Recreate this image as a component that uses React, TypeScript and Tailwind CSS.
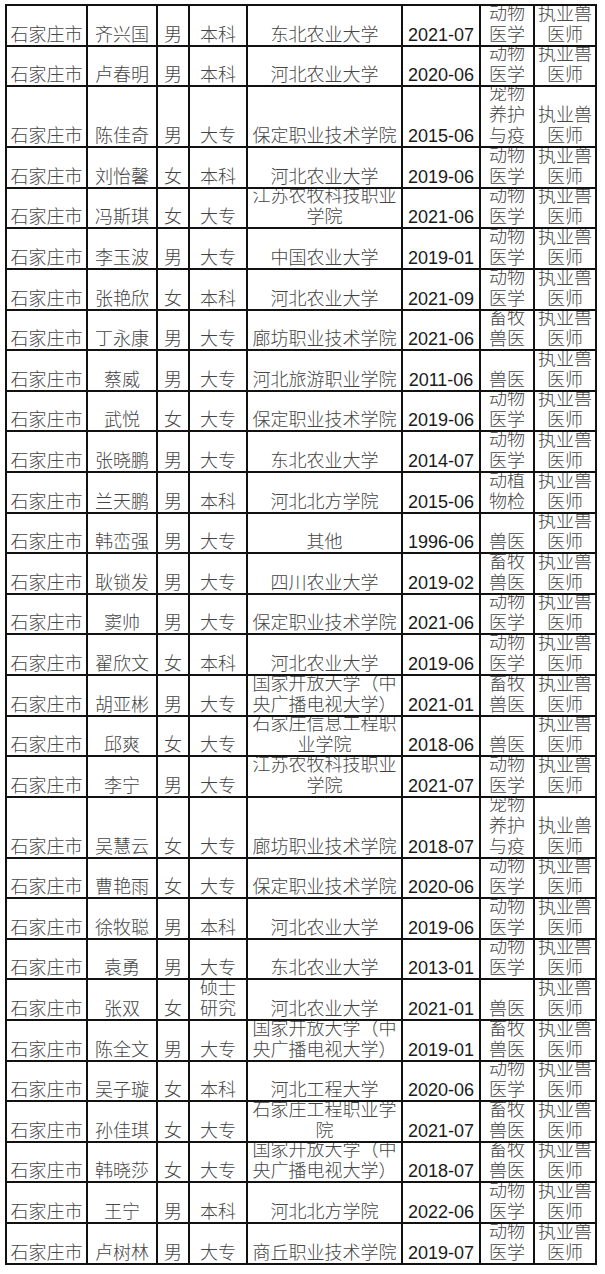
type Row = {
  name: string;
  gender: string;
  edu: string[];
  school: string[];
  date: string;
  major: string[];
  tall?: boolean;
};

const animal = ["动物", "医学"];
const herd = ["畜牧", "兽医"];
const pet = ["宠物", "养护", "与疫"];
const vet = ["执业兽", "医师"];
const ouc = ["国家开放大学（中", "央广播电视大学）"];
const jiangsu = ["江苏农牧科技职业", "学院"];

const rows: Row[] = [
  { name: "齐兴国", gender: "男", edu: ["本科"], school: ["东北农业大学"], date: "2021-07", major: animal },
  { name: "卢春明", gender: "男", edu: ["本科"], school: ["河北农业大学"], date: "2020-06", major: animal },
  { name: "陈佳奇", gender: "男", edu: ["大专"], school: ["保定职业技术学院"], date: "2015-06", major: pet, tall: true },
  { name: "刘怡馨", gender: "女", edu: ["本科"], school: ["河北农业大学"], date: "2019-06", major: animal },
  { name: "冯斯琪", gender: "女", edu: ["大专"], school: jiangsu, date: "2021-06", major: animal },
  { name: "李玉波", gender: "男", edu: ["大专"], school: ["中国农业大学"], date: "2019-01", major: animal },
  { name: "张艳欣", gender: "女", edu: ["本科"], school: ["河北农业大学"], date: "2021-09", major: animal },
  { name: "丁永康", gender: "男", edu: ["大专"], school: ["廊坊职业技术学院"], date: "2021-06", major: herd },
  { name: "蔡威", gender: "男", edu: ["大专"], school: ["河北旅游职业学院"], date: "2011-06", major: ["兽医"] },
  { name: "武悦", gender: "女", edu: ["大专"], school: ["保定职业技术学院"], date: "2019-06", major: animal },
  { name: "张晓鹏", gender: "男", edu: ["大专"], school: ["东北农业大学"], date: "2014-07", major: animal },
  { name: "兰天鹏", gender: "男", edu: ["本科"], school: ["河北北方学院"], date: "2015-06", major: ["动植", "物检"] },
  { name: "韩峦强", gender: "男", edu: ["大专"], school: ["其他"], date: "1996-06", major: ["兽医"] },
  { name: "耿锁发", gender: "男", edu: ["大专"], school: ["四川农业大学"], date: "2019-02", major: herd },
  { name: "窦帅", gender: "男", edu: ["大专"], school: ["保定职业技术学院"], date: "2021-06", major: animal },
  { name: "翟欣文", gender: "女", edu: ["本科"], school: ["河北农业大学"], date: "2019-06", major: animal },
  { name: "胡亚彬", gender: "男", edu: ["大专"], school: ouc, date: "2021-01", major: herd },
  { name: "邱爽", gender: "女", edu: ["大专"], school: ["石家庄信息工程职", "业学院"], date: "2018-06", major: ["兽医"] },
  { name: "李宁", gender: "男", edu: ["大专"], school: jiangsu, date: "2021-07", major: animal },
  { name: "吴慧云", gender: "女", edu: ["大专"], school: ["廊坊职业技术学院"], date: "2018-07", major: pet, tall: true },
  { name: "曹艳雨", gender: "女", edu: ["大专"], school: ["保定职业技术学院"], date: "2020-06", major: animal },
  { name: "徐牧聪", gender: "男", edu: ["本科"], school: ["河北农业大学"], date: "2019-06", major: animal },
  { name: "袁勇", gender: "男", edu: ["大专"], school: ["东北农业大学"], date: "2013-01", major: animal },
  { name: "张双", gender: "女", edu: ["硕士", "研究"], school: ["河北农业大学"], date: "2021-01", major: ["兽医"] },
  { name: "陈全文", gender: "男", edu: ["大专"], school: ouc, date: "2019-01", major: herd },
  { name: "吴子璇", gender: "女", edu: ["本科"], school: ["河北工程大学"], date: "2020-06", major: animal },
  { name: "孙佳琪", gender: "女", edu: ["大专"], school: ["石家庄工程职业学", "院"], date: "2021-07", major: herd },
  { name: "韩晓莎", gender: "女", edu: ["大专"], school: ouc, date: "2018-07", major: herd },
  { name: "王宁", gender: "男", edu: ["本科"], school: ["河北北方学院"], date: "2022-06", major: animal },
  { name: "卢树林", gender: "男", edu: ["大专"], school: ["商丘职业技术学院"], date: "2019-07", major: animal },
];

function Cell({ lines, tall }: { lines: string[]; tall?: boolean }) {
  return (
    <div
      className={`${tall ? "h-[59px]" : "h-[38.6px]"} bg-white overflow-hidden flex flex-col justify-end items-center pb-[1px] font-['Noto_Sans_CJK_SC',sans-serif] font-light text-[18px] leading-[21px] text-[#444]`}
    >
      {lines.map((l, i) => (
        <div key={i} className="whitespace-nowrap">
          {l}
        </div>
      ))}
    </div>
  );
}

function DateCell({ date, tall }: { date: string; tall?: boolean }) {
  return (
    <div
      className={`${tall ? "h-[59px]" : "h-[38.6px]"} bg-white overflow-hidden flex flex-col justify-end items-center pb-[1px] font-['Liberation_Sans',sans-serif] text-[18px] leading-[17px] text-[#1a1a1a]`}
    >
      {date}
    </div>
  );
}

export default function App() {
  return (
    <div className="bg-white min-h-screen pt-[4px] pl-[5px]">
      <div className="w-fit grid grid-cols-[79px_68px_30px_56px_153px_76px_52px_60px] gap-[2px] p-[2px] bg-[#111]">
        {rows.map((r, i) => (
          <div key={i} className="contents">
            <Cell lines={["石家庄市"]} tall={r.tall} />
            <Cell lines={[r.name]} tall={r.tall} />
            <Cell lines={[r.gender]} tall={r.tall} />
            <Cell lines={r.edu} tall={r.tall} />
            <Cell lines={r.school} tall={r.tall} />
            <DateCell date={r.date} tall={r.tall} />
            <Cell lines={r.major} tall={r.tall} />
            <Cell lines={vet} tall={r.tall} />
          </div>
        ))}
      </div>
    </div>
  );
}
